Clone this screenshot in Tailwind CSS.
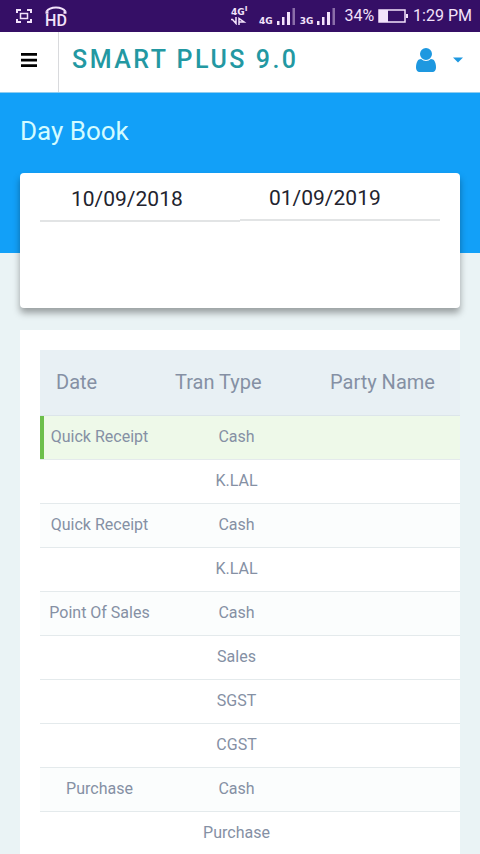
<!DOCTYPE html>
<html lang="en">
<head>
<meta charset="utf-8">
<meta name="viewport" content="width=device-width, initial-scale=1">
<title>Smart Plus 9.0 - Day Book</title>
<script src="https://cdn.jsdelivr.net/npm/@tailwindcss/browser@4"></script>
</head>
<body class="flex h-screen flex-col overflow-hidden bg-[#eaf3f5] font-['Roboto',sans-serif]">

<!-- Status bar -->
<div class="flex h-8 shrink-0 items-center justify-between bg-[#350f66] pr-2 pl-4 text-[#f3e3fb]">
  <div class="flex items-center gap-3">
    <svg class="h-4 w-4" viewBox="0 0 16 16" fill="none" stroke="currentColor" stroke-width="2" aria-hidden="true">
      <path d="M1 5V2h4M11 2h4v3M15 11v3h-4M5 14H1v-3"/><rect x="4.500" y="5.500" width="7" height="5" stroke-width="1.500"/>
    </svg>
    <div class="flex flex-col items-center gap-px">
      <svg class="h-2 w-6" viewBox="0 0 24 8" fill="none" stroke="currentColor" aria-hidden="true">
        <path d="M2.500 5.500C6 0 18 0 21.500 5.500" stroke-width="2"/><path d="M1.500 6.500h3M22.500 6.500h-3" stroke-width="2.500"/>
      </svg>
      <span class="text-base leading-3 font-medium">HD</span>
    </div>
  </div>
  <div class="flex items-center">
    <div class="flex items-end gap-1 pb-px">
      <div class="flex w-6 flex-col gap-px font-['DejaVu_Sans',sans-serif]">
        <span class="text-[9px] leading-2 font-bold whitespace-nowrap">4G<sup class="text-[8px] leading-0">ı</sup></span>
        <svg class="h-2 w-4" viewBox="0 0 16 8" fill="none" stroke="currentColor" stroke-width="1.500" aria-hidden="true">
          <path d="M0 2.500h1.500L5 6.500V0M8 8V1.500l5 3.500H8"/>
        </svg>
      </div>
      <span class="font-['DejaVu_Sans',sans-serif] text-[9px] leading-2 font-bold">4G</span>
      <svg class="h-[18px] w-[19px]" viewBox="0 0 19 18" fill="currentColor" aria-hidden="true">
        <path d="M0 14h2.500v4H0zM5 10h2.500v8H5zM10 5h3v13h-3z"/><path d="M15.500 1h2.500v17h-2.500z" opacity=".45"/>
      </svg>
      <span class="font-['DejaVu_Sans',sans-serif] text-[9px] leading-2 font-bold">3G</span>
      <svg class="h-[18px] w-[19px]" viewBox="0 0 19 18" fill="currentColor" aria-hidden="true">
        <path d="M0 14h2.500v4H0zM5 10h2.500v8H5zM10 5h3v13h-3z"/><path d="M15.500 1h2.500v17h-2.500z" opacity=".45"/>
      </svg>
    </div>
    <span class="ml-2 text-base">34%</span>
    <svg class="ml-1 h-[14px] w-[31px]" viewBox="0 0 31 14" aria-hidden="true">
      <rect x="1" y="1" width="26" height="12" fill="none" stroke="currentColor" stroke-width="1.500"/>
      <path d="M1 1h9v12H1zM28 5h2v4h-2z" fill="currentColor"/>
    </svg>
    <span class="ml-1 text-base">1:29 PM</span>
  </div>
</div>

<!-- App bar -->
<header class="flex h-[61px] shrink-0 items-center border-b border-[#8fcdf0] bg-white">
  <button type="button" aria-label="Menu" class="flex h-full w-[59px] items-center justify-center border-r border-[#d9dadd] pb-1">
    <svg class="h-4 w-4" viewBox="0 0 16 16" fill="#000" aria-hidden="true"><path d="M0 1h16v2.700H0zM0 6.700h16v2.700H0zM0 12.300h16V15H0z"/></svg>
  </button>
  <h1 class="grow pb-1 pl-[13px] text-[25px] font-medium tracking-widest text-[#2398a2]">SMART PLUS 9.0</h1>
  <button type="button" aria-label="Account" class="flex items-center gap-[17px] pr-[17px] pb-1 text-[#1e98e0]">
    <svg class="h-6 w-5" viewBox="0 0 1280 1536" fill="currentColor" aria-hidden="true">
      <path d="M1280 1271q0 109-62.500 187T1067 1536H213q-88 0-150.500-78T0 1271q0-85 8.500-160.500t31.500-152T98.500 827t94-89T327 704q131 128 313 128T953 704q76 0 134.500 34.500t94 89 58.500 131.500 31.500 152 8.500 160zM1024 384q0 159-112.500 271.500T640 768 368.500 655.500 256 384t112.500-271.500T640 0t271.500 112.500T1024 384z"/>
    </svg>
    <svg class="h-[6px] w-[10px]" viewBox="0 0 10 6" fill="currentColor" aria-hidden="true"><path d="M0 .5h10L5 5.500z"/></svg>
  </button>
</header>

<main class="min-h-0 grow overflow-hidden">
  <section class="h-40 bg-[#12a0f8] px-5 pt-5">
    <h2 class="text-[26px] leading-9 text-[#d3fbff]">Day Book</h2>
  </section>

  <form class="relative mx-5 -mt-20 flex h-[135px] items-start rounded-[4px] bg-white px-5 shadow-[0_5px_7px_rgba(0,0,0,0.35)]">
    <input type="text" aria-label="From date" value="10/09/2018" class="h-[49px] w-1/2 border-b-2 border-[#e2e4e5] pt-1 pl-[31px] text-[21px] text-[#22232e] outline-none">
    <input type="text" aria-label="To date" value="01/09/2019" class="h-12 w-1/2 border-b-2 border-[#e2e4e5] pt-1 pl-[29px] text-[21px] text-[#22232e] outline-none">
  </form>

  <section class="mx-5 mt-[22px] bg-white pt-5 pb-5 pl-5">
    <table class="w-full table-fixed border-collapse text-center text-base text-[#8590a4]">
      <colgroup><col class="w-[119px]"><col class="w-[155px]"><col></colgroup>
      <thead>
        <tr class="h-[65px] border-b border-[#dce5ea] bg-[#e8f0f4] text-left text-xl">
          <th class="pl-4 font-normal">Date</th>
          <th class="pl-4 font-normal">Tran Type</th>
          <th class="pl-4 font-normal">Party Name</th>
        </tr>
      </thead>
      <tbody>
        <tr class="h-11 border-b border-[#e4eaec] bg-[#eef9e9]"><td class="shadow-[inset_4px_0_0_#6cbf4b]">Quick Receipt</td><td>Cash</td><td></td></tr>
        <tr class="h-11 border-b border-[#e4eaec]"><td></td><td>K.LAL</td><td></td></tr>
        <tr class="h-11 border-b border-[#e4eaec] bg-[#fbfdfd]"><td>Quick Receipt</td><td>Cash</td><td></td></tr>
        <tr class="h-11 border-b border-[#e4eaec]"><td></td><td>K.LAL</td><td></td></tr>
        <tr class="h-11 border-b border-[#e4eaec] bg-[#fbfdfd]"><td>Point Of Sales</td><td>Cash</td><td></td></tr>
        <tr class="h-11 border-b border-[#e4eaec]"><td></td><td>Sales</td><td></td></tr>
        <tr class="h-11 border-b border-[#e4eaec]"><td></td><td>SGST</td><td></td></tr>
        <tr class="h-11 border-b border-[#e4eaec]"><td></td><td>CGST</td><td></td></tr>
        <tr class="h-11 border-b border-[#e4eaec] bg-[#fbfdfd]"><td>Purchase</td><td>Cash</td><td></td></tr>
        <tr class="h-11 border-b border-[#e4eaec]"><td></td><td>Purchase</td><td></td></tr>
      </tbody>
    </table>
  </section>
</main>
</body>
</html>
